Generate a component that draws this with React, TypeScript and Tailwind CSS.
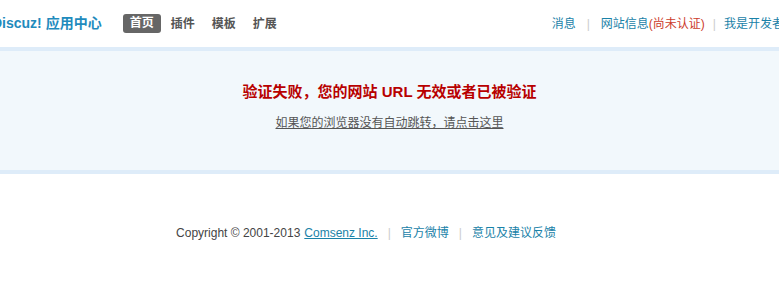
import React from "react";

export default function App() {
  const font = { fontFamily: '"Liberation Sans", "Noto Sans CJK SC", sans-serif' };
  return (
    <div className="w-[779px] h-[290px] overflow-hidden bg-white text-[12px]" style={font}>
      <div className="h-[47px] flex items-center w-[784px]">
        <div className="ml-[-8px] text-[14px] font-bold text-[#1f8bbd] whitespace-nowrap">Discuz! 应用中心</div>
        <div className="flex items-center ml-[21px] gap-[3px]">
          <span className="bg-[#666] text-white font-bold rounded-[3px] px-[7px] h-[19px] leading-[19px]">首页</span>
          <span className="text-[#555] font-bold px-[7px]">插件</span>
          <span className="text-[#555] font-bold px-[7px]">模板</span>
          <span className="text-[#555] font-bold px-[7px]">扩展</span>
        </div>
        <div className="ml-auto flex items-center whitespace-nowrap">
          <span className="text-[#1a82a8]">消息</span>
          <span className="text-[#ccc] mx-[11px]">|</span>
          <span className="text-[#1a82a8]">网站信息</span>
          <span className="text-[#cc3c2c]">(尚未认证)</span>
          <span className="text-[#ccc] mx-[8px]">|</span>
          <span className="text-[#1a82a8]">我是开发者</span>
        </div>
      </div>
      <div className="border-y-4 border-[#deecf9] bg-[#f2f8fc] h-[127px] flex flex-col items-center pt-[31px]">
        <div className="text-[15px] font-bold text-[#b80000] leading-[20px]">验证失败，您的网站 URL 无效或者已被验证</div>
        <div className="mt-[13px] text-[#555] underline leading-[16px]">如果您的浏览器没有自动跳转，请点击这里</div>
      </div>
      <div className="flex items-center justify-center mt-[50px] pr-[47px] text-[#444] whitespace-nowrap">
        <span>Copyright © 2001-2013 </span>
        <span className="ml-[4px] text-[#1a82a8] underline">Comsenz Inc.</span>
        <span className="text-[#ccc] mx-[10px]">|</span>
        <span className="text-[#1a82a8]">官方微博</span>
        <span className="text-[#ccc] mx-[10px]">|</span>
        <span className="text-[#1a82a8]">意见及建议反馈</span>
      </div>
    </div>
  );
}
